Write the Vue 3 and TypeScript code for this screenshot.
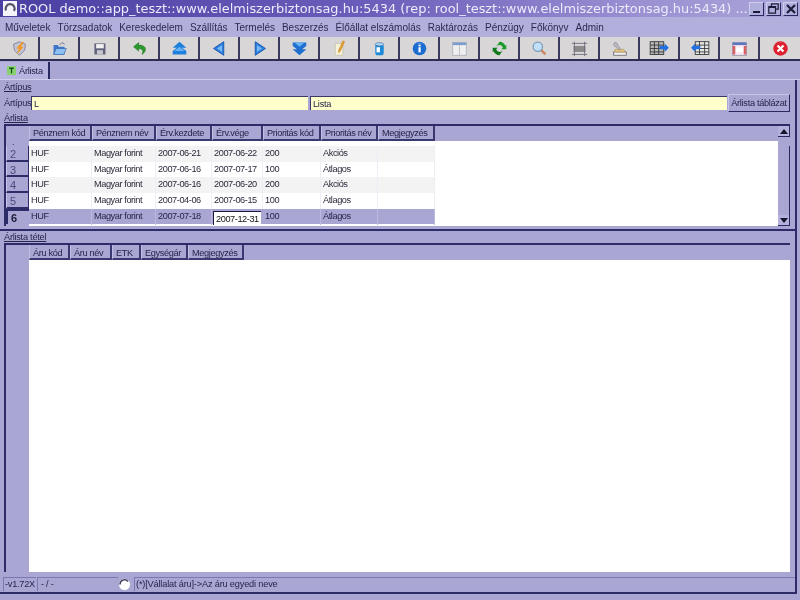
<script setup lang="ts">
const menus: string[] = ['Műveletek', 'Törzsadatok', 'Kereskedelem', 'Szállítás', 'Termelés', 'Beszerzés', 'Élőállat elszámolás', 'Raktározás', 'Pénzügy', 'Főkönyv', 'Admin']
const priceHeads: string[] = ['Pénznem kód', 'Pénznem név', 'Érv.kezdete', 'Érv.vége', 'Prioritás kód', 'Prioritás név', 'Megjegyzés']
const itemHeads: string[] = ['Áru kód', 'Áru név', 'ETK', 'Egységár', 'Megjegyzés']
interface Row { n: number; start: string; end: string; code: string; name: string; sel?: boolean }
const rows: Row[] = [
  { n: 2, start: '2007-06-21', end: '2007-06-22', code: '200', name: 'Akciós' },
  { n: 3, start: '2007-06-16', end: '2007-07-17', code: '100', name: 'Átlagos' },
  { n: 4, start: '2007-06-16', end: '2007-06-20', code: '200', name: 'Akciós' },
  { n: 5, start: '2007-04-06', end: '2007-06-15', code: '100', name: 'Átlagos' },
  { n: 6, start: '2007-07-18', end: '2007-12-31', code: '100', name: 'Átlagos', sel: true }
]
</script>

<template>
  <div class="window">
    <header class="titlebar">
      <svg class="app-icon" width="14" height="15" viewBox="0 0 14 15">
        <rect width="14" height="15" fill="#f4f4fa" />
        <path d="M3 9.5A4.5 4.5 0 1 1 11 10" fill="none" stroke="#55556a" stroke-width="2.2" />
      </svg>
      <span class="title-text">ROOL demo::app_teszt::www.elelmiszerbiztonsag.hu:5434 (rep: rool_teszt::www.elelmiszerbiztonsag.hu:5434) ...</span>
      <div class="win-buttons">
        <span class="win-btn"><i class="glyph-min"></i></span>
        <span class="win-btn"><svg width="11" height="11" viewBox="0 0 11 11"><path d="M3.5 3V.8h6.7v5.4H8M.8 3.5h6.7v6.7H.8zM.8 4.5h6.7" fill="none" stroke="#1c1c3c" stroke-width="1.2" /></svg></span>
        <span class="win-btn"><svg width="10" height="10" viewBox="0 0 10 10"><path d="M1 1l8 8M9 1L1 9" stroke="#1c1c3c" stroke-width="2.2" /></svg></span>
      </div>
    </header>

    <nav class="menubar">
      <span v-for="m in menus" :key="m" class="menu-item">{{ m }}</span>
    </nav>

    <div class="toolbar">
      <button class="tool"><svg viewBox="0 0 20 20"><path d="M3 5l7-3 7 3-1 7-6 6-6-6z" fill="#c4c4d8" stroke="#7a7a96" /><path d="M13 2L6 10h3l-2 7 8-9h-3l3-6z" fill="#ee9a2a" /></svg></button>
      <button class="tool"><svg viewBox="0 0 20 20"><path d="M3 6h5l1 2h7v9H3z" fill="#3f78c8" /><path d="M3 17l3-7h12l-3 7z" fill="#8cc0f0" stroke="#2a5aa8" stroke-width=".7" /><path d="M10 6l3-3 3 2" fill="none" stroke="#6a6a8a" /></svg></button>
      <button class="tool"><svg viewBox="0 0 20 20"><rect x="4" y="4" width="13" height="13" fill="#62627c" /><rect x="6" y="4.8" width="9" height="5" fill="#f2f2f2" /><rect x="7" y="12" width="7" height="5" fill="#c8c8d0" /></svg></button>
      <button class="tool"><svg viewBox="0 0 20 20"><path d="M9 3L3 8l6 5v-3c3 0 4 1 5 3l-1 4c3-2 4-4 4-6 0-3-3-5-8-5z" fill="#2a9a2e" stroke="#157018" stroke-width=".6" /></svg></button>
      <button class="tool"><svg viewBox="0 0 20 20"><path d="M10 2l8 7h-5l5 4v4H2v-4l5-4H2z" fill="#1f7fdc" /><path d="M10 8l6 5H4z" fill="#66b4f4" /></svg></button>
      <button class="tool"><svg viewBox="0 0 20 20"><path d="M15 2v16L3 10z" fill="#2a7fe0" stroke="#1450a8" /><path d="M13 6v8l-6-4z" fill="#7ab8f4" /></svg></button>
      <button class="tool"><svg viewBox="0 0 20 20"><path d="M5 2v16l12-8z" fill="#2a7fe0" stroke="#1450a8" /><path d="M7 6v8l6-4z" fill="#7ab8f4" /></svg></button>
      <button class="tool"><svg viewBox="0 0 20 20"><path d="M2 3h16v4l-5 4h5l-8 7-8-7h5L2 7z" fill="#1f6fd0" /><path d="M4 3h12l-6 5z" fill="#66b4f4" /></svg></button>
      <button class="tool"><svg viewBox="0 0 20 20"><path d="M5 4h9v14H5z" fill="#f6f2d8" stroke="#c8c4b0" /><path d="M14 1l2 1-5 11-2 2 0-3z" fill="#e8a030" stroke="#b87010" stroke-width=".5" /></svg></button>
      <button class="tool"><svg viewBox="0 0 20 20"><rect x="5" y="4" width="10" height="14" rx="3" fill="#1f8ad8" /><ellipse cx="10" cy="5" rx="5" ry="2" fill="#a8d4f4" stroke="#3a5a8a" stroke-width=".6" /><rect x="6.500" y="8.500" width="4" height="6" fill="#fff" /></svg></button>
      <button class="tool"><svg viewBox="0 0 20 20"><circle cx="10" cy="10" r="8" fill="#1c6cd0" /><path d="M6 5a6 6 0 0 1 8 0 8 8 0 0 0-8 0z" fill="#a8d0f8" /><rect x="8.800" y="8.500" width="2.600" height="6" fill="#fff" /><rect x="8.800" y="5.500" width="2.600" height="2" fill="#fff" /></svg></button>
      <button class="tool"><svg viewBox="0 0 20 20"><rect x="2" y="3" width="16" height="15" fill="#eeeeee" stroke="#b0b0bc" /><rect x="2" y="3" width="16" height="3" fill="#7a9ed0" /><path d="M10 6v12" stroke="#b8b8c4" /></svg></button>
      <button class="tool"><svg viewBox="0 0 20 20"><path d="M10 2a8 8 0 0 1 7 5l1-2v6h-6l2-2a4.500 4.500 0 0 0-8-1z" fill="#1d9a2c" /><path d="M10 18a8 8 0 0 1-7-5l-1 2V9h6l-2 2a4.500 4.500 0 0 0 8 1z" fill="#0f7a1c" /></svg></button>
      <button class="tool"><svg viewBox="0 0 20 20"><path d="M12 12l5 5" stroke="#cc8866" stroke-width="3" /><circle cx="8" cy="8" r="5.500" fill="#bfe0f8" stroke="#7d9cbc" stroke-width="1.500" /></svg></button>
      <button class="tool"><svg viewBox="0 0 20 20"><rect x="3" y="7" width="14" height="7" fill="#8a8a8a" /><path d="M1 4h18M1 17h18M4 2v17M16 2v17" stroke="#6a6a7a" /></svg></button>
      <button class="tool"><svg viewBox="0 0 20 20"><path d="M3 14h15v4H3z" fill="#f0f0f0" stroke="#6a6a70" /><path d="M5 11h10l2 3H4z" fill="#e8c888" stroke="#a08040" stroke-width=".6" /><path d="M4 3a3 3 0 0 0 2 5l4 4 1-2-3-4a3 3 0 0 0-3-3z" fill="#bcbcc4" stroke="#70707a" stroke-width=".6" /></svg></button>
      <button class="tool"><svg class="wide" viewBox="0 0 24 20"><rect x="1" y="2" width="16" height="15" fill="#b8b8b8" stroke="#333" /><path d="M1 6h16M1 10h16M1 14h16M6 2v15M11 2v15" stroke="#333" /><path d="M12 7h6V4l5 5-5 5v-3h-6z" fill="#1f6fe0" /></svg></button>
      <button class="tool"><svg class="wide" viewBox="0 0 24 20"><rect x="7" y="2" width="16" height="15" fill="#e8e8e8" stroke="#333" /><path d="M7 6h16M7 10h16M7 14h16M12 2v15M18 2v15" stroke="#333" /><path d="M13 7H7V4L2 9l5 5v-3h6z" fill="#1f6fe0" /></svg></button>
      <button class="tool"><svg viewBox="0 0 20 20"><rect x="2" y="3" width="16" height="15" fill="#f8e8f0" stroke="#9090b0" /><rect x="2" y="3" width="16" height="3" fill="#5a78c0" /><rect x="2" y="7" width="3" height="10" fill="#d86060" /><rect x="15" y="7" width="3" height="10" fill="#d86060" /><rect x="6" y="9" width="8" height="5" fill="#fff" /></svg></button>
      <button class="tool"><svg viewBox="0 0 20 20"><circle cx="10" cy="10" r="8.500" fill="#dc2030" /><path d="M6.500 6.500l7 7M13.500 6.500l-7 7" stroke="#fff" stroke-width="2.600" /><path d="M5 5a7 7 0 0 1 10 0 9 9 0 0 0-10 0z" fill="#f4a0a0" /></svg></button>
    </div>

    <div class="tabstrip">
      <div class="tab">
        <svg width="9" height="9" viewBox="0 0 10 10"><rect width="10" height="10" fill="#88d070" /><path d="M2.500 2.500h5M5 2.500V8" stroke="#145018" stroke-width="1.400" /></svg>
        <span>Árlista</span>
      </div>
    </div>

    <main class="pane">
      <div class="section-title first">Ártípus</div>
      <div class="form-row">
        <label class="form-label">Ártípus</label>
        <div class="field code">L</div>
        <div class="field name">Lista</div>
        <button class="push">Árlista táblázat</button>
      </div>
      <div class="section-title second">Árlista</div>

      <section class="grid price">
        <div class="grid-head">
          <div class="corner"></div>
          <div class="heads price-cols">
            <div v-for="h in priceHeads" :key="h" class="head-cell">{{ h }}</div>
          </div>
        </div>
        <div class="grid-main">
          <div class="row-heads">
            <div class="stub">.</div>
            <div v-for="r in rows" :key="r.n" class="row-num" :class="{ current: r.sel }">{{ r.n }}</div>
          </div>
          <div class="rows">
            <div class="clipped"></div>
            <div v-for="r in rows" :key="r.n" class="data-row price-cols" :class="{ selected: r.sel, odd: r.n % 2 === 0 && !r.sel }">
              <div class="cell">HUF</div>
              <div class="cell">Magyar forint</div>
              <div class="cell">{{ r.start }}</div>
              <div class="cell" :class="{ editing: r.sel }">{{ r.end }}</div>
              <div class="cell">{{ r.code }}</div>
              <div class="cell">{{ r.name }}</div>
              <div class="cell"></div>
            </div>
          </div>
        </div>
        <div class="scrollbar">
          <span class="scroll-btn up"></span>
          <span class="scroll-track"></span>
          <span class="scroll-btn down"></span>
        </div>
      </section>

      <div class="divider"></div>
      <div class="section-title third">Árlista tétel</div>

      <section class="grid items">
        <div class="grid-head">
          <div class="corner"></div>
          <div class="heads item-cols">
            <div v-for="h in itemHeads" :key="h" class="head-cell">{{ h }}</div>
          </div>
        </div>
        <div class="grid-main fill">
          <div class="row-heads"></div>
          <div class="rows"></div>
        </div>
      </section>

      <footer class="statusbar">
        <div class="status version">-v1.72X</div>
        <div class="status pos">- / -</div>
        <div class="status-icon"><svg width="13" height="13" viewBox="0 0 13 13"><circle cx="6.500" cy="6.500" r="5.500" fill="#fff" /><path d="M2 6.500a4.500 4.500 0 0 1 8-3" fill="none" stroke="#44445a" stroke-width="1.500" /></svg></div>
        <div class="status message">(*)[Vállalat áru]-&gt;Az áru egyedi neve</div>
      </footer>
    </main>
  </div>
</template>

<style scoped>
.window {
  width: 800px;
  height: 600px;
  display: flex;
  flex-direction: column;
  overflow: hidden;
  background: #aaa6d4;
  color: #25254a;
  font-family: "Liberation Sans", Arial, sans-serif;
  font-size: 9.2px;
  letter-spacing: -0.25px;
  filter: blur(0.35px);
}
.titlebar {
  height: 17px;
  flex: none;
  display: flex;
  align-items: center;
  gap: 2px;
  padding-left: 3px;
  background: linear-gradient(90deg, #4a3fa2 0%, #6a5cba 45%, #9a90d2 80%, #aaa6d8 100%);
}
.app-icon { flex: none; }
.title-text {
  flex: 1;
  min-width: 0;
  white-space: nowrap;
  overflow: hidden;
  font-family: "DejaVu Sans", Verdana, sans-serif;
  font-size: 12.900px;
  letter-spacing: 0;
  color: #ecebfa;
}
.win-buttons { display: flex; gap: 2px; padding-right: 2px; flex: none; }
.win-btn {
  width: 15px;
  height: 14px;
  display: flex;
  align-items: center;
  justify-content: center;
  background: #b0aeda;
  border: 1px solid #cfcdec;
  border-right-color: #2a2860;
  border-bottom-color: #2a2860;
  box-sizing: border-box;
}
.glyph-min { width: 7px; height: 2px; margin-top: 7px; background: #1c1c3c; }
.menubar {
  height: 20px;
  flex: none;
  display: flex;
  align-items: center;
  gap: 7px;
  padding-left: 5px;
  background: #b3afdd;
  font-size: 10px;
  letter-spacing: -0.02px;
}
.menu-item { color: #2a2a52; white-space: nowrap; }
.toolbar {
  height: 24px;
  flex: none;
  display: flex;
  box-sizing: border-box;
  border-bottom: 2px solid #2e2e55;
  background: #d6d4d2;
}
.tool {
  width: 40px;
  flex: none;
  padding: 0;
  border: 0;
  border-right: 2px solid #3a3a5c;
  background: #d8d6d6;
  display: flex;
  align-items: center;
  justify-content: center;
}
.tool svg { width: 17px; height: 17px; }
.tool svg.wide { width: 21px; }
.tool:last-child { border-right: 0; }
.tabstrip {
  height: 18px;
  flex: none;
  display: flex;
  border-bottom: 1px solid #d0ceec;
}
.tab {
  width: 50px;
  box-sizing: border-box;
  padding-left: 7px;
  margin-top: 1px;
  display: flex;
  align-items: center;
  gap: 3px;
  background: #b7b4e0;
  border-right: 2px solid #2a2860;
}
.pane {
  flex: 1;
  min-height: 0;
  margin-right: 3px;
  margin-bottom: 6px;
  display: flex;
  flex-direction: column;
  border-right: 2px solid #2e2c68;
  border-bottom: 2px solid #2e2c68;
  box-sizing: border-box;
}
.section-title {
  padding-left: 4px;
  line-height: 12px;
  text-decoration: underline;
  flex: none;
}
.section-title.first { margin-top: 1px; }
.section-title.second { line-height: 11px; margin-top: 1px; }
.section-title.third { line-height: 11px; margin-top: 1px; }
.form-row {
  display: flex;
  align-items: center;
  height: 18px;
  margin-top: 1px;
  padding-left: 4px;
  flex: none;
}
.form-label { width: 27px; flex: none; white-space: nowrap; }
.field {
  height: 14px;
  line-height: 14px;
  padding-left: 2px;
  box-sizing: border-box;
  background: #ffffcc;
  border-top: 1px solid #3a3868;
  border-left: 1px solid #3a3868;
}
.field.code { width: 277px; margin-right: 2px; }
.field.name { width: 417px; }
.push {
  width: 62px;
  height: 18px;
  margin-left: 1px;
  padding: 0;
  font: inherit;
  letter-spacing: -0.3px;
  color: #25254a;
  background: #aaa6d4;
  border: 1px solid #c6c4e8;
  border-right: 1px solid #2a2860;
  border-bottom: 1px solid #2a2860;
  white-space: nowrap;
}
.grid {
  position: relative;
  display: flex;
  flex-direction: column;
  flex: none;
  margin-left: 4px;
  margin-right: 5px;
  border-left: 2px solid #2e2c68;
  border-top: 2px solid #2e2c68;
  box-sizing: border-box;
}
.grid.price { height: 102px; }
.grid.items { flex: 1; min-height: 0; }
.grid-head { height: 15px; display: flex; flex: none; background: #aaa6d4; }
.price .grid-head { margin-right: 12px; }
.corner { width: 23px; flex: none; }
.heads { display: grid; height: 15px; }
.price-cols { grid-template-columns: 63px 64px 56px 51px 58px 57px 57px; }
.item-cols { grid-template-columns: 41px 42px 29px 47px 56px; }
.head-cell {
  box-sizing: border-box;
  padding-left: 3px;
  line-height: 15px;
  letter-spacing: -0.35px;
  white-space: nowrap;
  overflow: hidden;
  border-left: 1px solid #c0bee2;
  border-right: 2px solid #3a3870;
  border-bottom: 2px solid #3a3870;
}
.items .head-cell { line-height: 16px; }
.grid-main { flex: 1; min-height: 0; display: flex; }
.price .grid-main { margin-right: 12px; }
.row-heads { width: 23px; flex: none; background: #aaa6d4; box-sizing: border-box; }
.stub { height: 5px; line-height: 2px; padding-left: 6px; }
.row-num {
  height: 15.700px;
  line-height: 17px;
  padding-left: 3px;
  box-sizing: border-box;
  font-size: 11px;
  color: #4a4a78;
  border-bottom: 2px solid #2e2c68;
  border-right: 1px solid #2e2c68;
  border-left: 1px solid #c8c6e8;
}
.row-num.current {
  line-height: 14px;
  font-weight: 700;
  color: #20203c;
  border: 0;
  border-top: 2px solid #2e2c68;
  border-left: 2px solid #2e2c68;
}
.rows { flex: 1; min-width: 0; background: #fff; }
.clipped { height: 5px; }
.data-row { display: grid; height: 15.700px; }
.odd { background: linear-gradient(90deg, #f3f3f3 0 405px, #fff 405px); }
.selected { background: linear-gradient(90deg, #aaa6d4 0 405px, #fff 405px); }
.cell {
  box-sizing: border-box;
  padding-left: 2px;
  line-height: 15px;
  letter-spacing: -0.42px;
  color: #2a2a3c;
  white-space: nowrap;
  border-right: 1px solid #eeedf6;
}
.selected .cell { border-right-color: #bcbae0; color: #25254a; }
.cell.editing {
  height: 14px;
  margin: 2px 2px 0 1px;
  padding-left: 2px;
  line-height: 14px;
  background: #fff;
  color: #111;
  border: 0;
  border-top: 1px solid #1c1c3c;
  border-left: 1px solid #1c1c3c;
}
.scrollbar {
  position: absolute;
  top: 0;
  right: 0;
  bottom: 0;
  width: 12px;
  display: flex;
  flex-direction: column;
  background: #aaa6d4;
}
.scroll-btn {
  height: 11px;
  flex: none;
  display: flex;
  align-items: center;
  justify-content: center;
  background: #b4b1dc;
  border-right: 1px solid #2a2860;
  border-bottom: 1px solid #2a2860;
  box-sizing: border-box;
}
.scroll-btn::before {
  content: "";
  border-left: 4px solid transparent;
  border-right: 4px solid transparent;
}
.scroll-btn.up::before { border-bottom: 5px solid #15152e; }
.scroll-btn.down::before { border-top: 5px solid #15152e; }
.scroll-track { flex: 1; margin-top: 9px; border-right: 1px solid #2a2860; }
.divider {
  height: 2px;
  margin-top: 3px;
  flex: none;
  background: #2e2c68;
}
.grid.items .grid-main { background: #fff; }
.fill .rows { height: 100%; }
.statusbar {
  height: 19px;
  flex: none;
  margin-left: 3px;
  margin-top: 1px;
  padding: 4px 0 1px;
  display: flex;
  align-items: stretch;
  box-sizing: border-box;
}
.status {
  line-height: 12px;
  padding-left: 1px;
  box-sizing: border-box;
  white-space: nowrap;
  border-left: 1px solid #7c79ae;
  border-top: 1px solid #7c79ae;
}
.version { width: 33px; }
.pos { width: 81px; margin-left: 1px; padding-left: 3px; }
.status-icon { width: 15px; flex: none; display: flex; align-items: center; }
.message { flex: 1; margin-left: 1px; padding-left: 1px; letter-spacing: -0.17px; }
</style>
<style>
html, body { margin: 0; background: #aaa6d4; }
</style>
